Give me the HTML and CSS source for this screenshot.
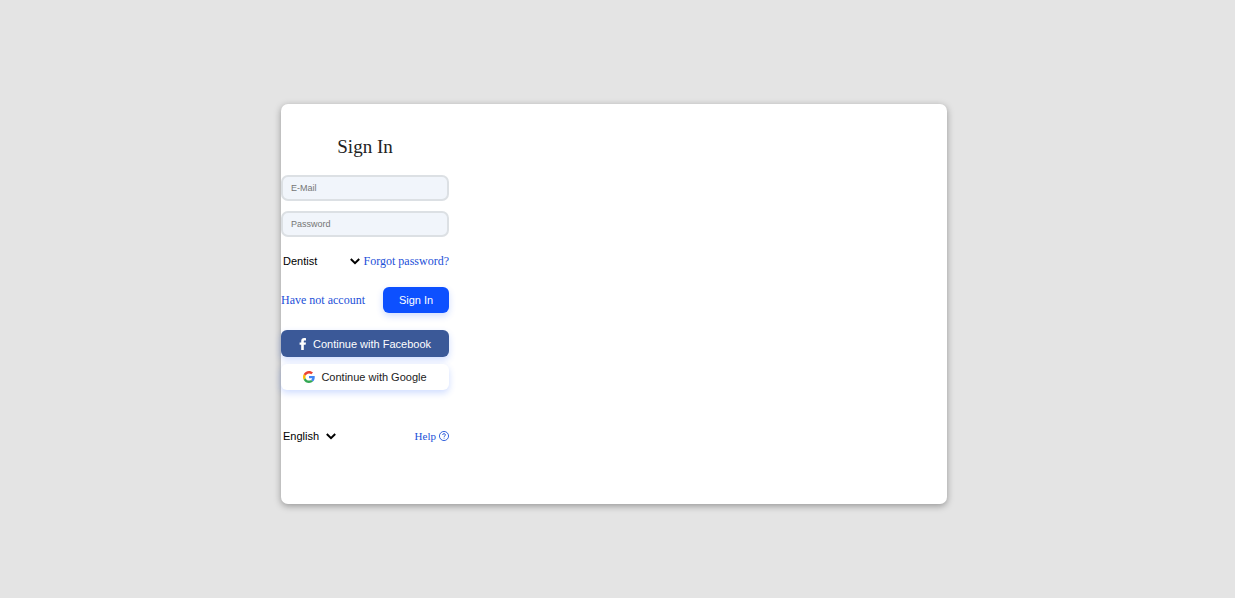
FILE: index.html
```html
<!DOCTYPE html>
<html lang="en">
<head>
<meta charset="utf-8">
<meta name="viewport" content="width=device-width, initial-scale=1">
<title>Sign In</title>
<link rel="stylesheet" href="styles.css">
</head>
<body>
<main class="card">
  <form class="form">
    <h1 class="title">Sign In</h1>
    <div class="fields">
      <input class="field" type="email" placeholder="E-Mail" aria-label="E-Mail">
      <input class="field" type="password" placeholder="Password" aria-label="Password">
    </div>
    <div class="row row-role">
      <div class="picker picker-role">
        <select class="select" aria-label="Role"><option>Dentist</option></select>
        <svg class="chevron" viewBox="0 0 10 7" aria-hidden="true"><path d="M.8 1 5 5.200 9.200 1"/></svg>
      </div>
      <a class="link" href="#">Forgot password?</a>
    </div>
    <div class="row row-submit">
      <a class="link" href="#">Have not account</a>
      <button class="button button-primary" type="submit">Sign In</button>
    </div>
    <div class="social">
      <button class="button button-facebook" type="button">
        <svg class="facebook-icon" viewBox="0 0 8 12" aria-hidden="true"><path fill="#fff" d="M2.200 12V6.800H.6V4.400h1.600V3.100C2.200 1.100 3.300.1 5.200.1c.8 0 1.500.1 1.800.1v2.200H5.900c-.9 0-1.100.4-1.100 1v1h2.200l-.4 2.400H4.800V12z"/></svg>
        Continue with Facebook
      </button>
      <button class="button button-google" type="button">
        <svg class="google-icon" viewBox="0 0 48 48" aria-hidden="true">
          <path fill="#ea4335" d="M24 9.5c3.54 0 6.71 1.22 9.21 3.6l6.85-6.85C35.9 2.38 30.47 0 24 0 14.62 0 6.51 5.38 2.56 13.22l7.98 6.19C12.43 13.72 17.74 9.5 24 9.5z"/>
          <path fill="#4285f4" d="M46.98 24.55c0-1.57-.15-3.09-.38-4.55H24v9.02h12.94c-.58 2.96-2.26 5.48-4.78 7.18l7.73 6c4.51-4.18 7.09-10.36 7.09-17.65z"/>
          <path fill="#fbbc05" d="M10.53 28.59c-.48-1.45-.76-2.99-.76-4.59s.27-3.14.76-4.59l-7.98-6.19C.92 16.46 0 20.12 0 24c0 3.88.92 7.54 2.56 10.78l7.97-6.19z"/>
          <path fill="#34a853" d="M24 48c6.48 0 11.93-2.13 15.89-5.81l-7.73-6c-2.15 1.45-4.92 2.3-8.16 2.3-6.26 0-11.57-4.22-13.47-9.91l-7.98 6.19C6.51 42.62 14.62 48 24 48z"/>
        </svg>
        Continue with Google
      </button>
    </div>
    <div class="row row-footer">
      <div class="picker picker-language">
        <select class="select" aria-label="Language"><option>English</option></select>
        <svg class="chevron" viewBox="0 0 10 7" aria-hidden="true"><path d="M.8 1 5 5.200 9.200 1"/></svg>
      </div>
      <a class="link link-help" href="#">Help
        <svg class="help-icon" viewBox="0 0 16 16" aria-hidden="true"><circle cx="8" cy="8" r="7.300"/><path d="M5.800 6.300C5.800 4.900 6.700 4.200 8 4.200s2.300.8 2.300 2c0 1.700-2.200 1.700-2.200 3.200M8.100 10.700v1.400"/></svg>
      </a>
    </div>
  </form>
</main>
</body>
</html>
```
FILE: styles.css
```css
* {
  box-sizing: border-box;
}

body {
  margin: 0;
  min-height: 100vh;
  padding: 10px 7px 0 0;
  display: flex;
  align-items: center;
  justify-content: center;
  background: #e4e4e4;
  font-family: "Liberation Serif", "Times New Roman", serif;
}

.card {
  width: 100%;
  max-width: 666px;
  min-height: 400px;
  padding: 31px 0;
  background: #fff;
  border-radius: 7px;
  box-shadow: 0 2px 7px rgba(0, 0, 0, 0.35);
}

.form {
  width: 168px;
  display: flex;
  flex-direction: column;
}

.title {
  margin: 0 0 16px;
  font-size: 19px;
  line-height: 24px;
  font-weight: 400;
  color: #222;
  text-align: center;
}

.fields {
  display: grid;
  gap: 10px;
}

.field {
  width: 100%;
  height: 26px;
  padding: 0 8px;
  border: 2px solid #dce0e4;
  border-radius: 7px;
  background: #f1f5fb;
  color: #222;
  font: 9px "Liberation Sans", Arial, sans-serif;
}

.field::placeholder {
  color: #757575;
}

.row {
  display: flex;
  align-items: center;
  justify-content: space-between;
}

.row-role {
  margin-top: 16px;
  height: 16px;
}

.row-submit {
  margin-top: 18px;
}

.row-footer {
  margin-top: 38px;
  height: 16px;
}

.link {
  color: #1c50d8;
  font-size: 12px;
  line-height: 16px;
  text-decoration: none;
  white-space: nowrap;
}

.link-help {
  display: flex;
  align-items: center;
  gap: 3px;
  font-size: 11px;
}

.picker {
  display: grid;
  align-items: center;
}

.picker-role {
  width: 79px;
}

.picker-language {
  width: 55px;
}

.select {
  grid-area: 1 / 1;
  width: 100%;
  height: 16px;
  padding: 0 12px 0 2px;
  border: 0;
  appearance: none;
  background: transparent;
  color: #000;
  font: 11px "Liberation Sans", Arial, sans-serif;
}

.chevron {
  grid-area: 1 / 1;
  justify-self: end;
  width: 10px;
  height: 7px;
  fill: none;
  stroke: #000;
  stroke-width: 2;
  pointer-events: none;
}

.button {
  height: 26px;
  padding: 0;
  display: flex;
  align-items: center;
  justify-content: center;
  gap: 6px;
  border: 0;
  border-radius: 6px;
  box-shadow: 0 3px 7px rgba(13, 80, 255, 0.2);
  color: #fff;
  font: 11px "Liberation Sans", Arial, sans-serif;
}

.button-primary {
  width: 66px;
  background: #0d50ff;
}

.social {
  margin-top: 17px;
  display: grid;
  gap: 7px;
}

.button-facebook {
  height: 27px;
  background: #3b5998;
}

.button-google {
  background: #fff;
  color: #222;
}

.facebook-icon {
  width: 8px;
  height: 12px;
}

.google-icon {
  width: 12px;
  height: 12px;
}

.help-icon {
  width: 10px;
  height: 10px;
  fill: none;
  stroke: #1c50d8;
  stroke-width: 1.4;
}
```
